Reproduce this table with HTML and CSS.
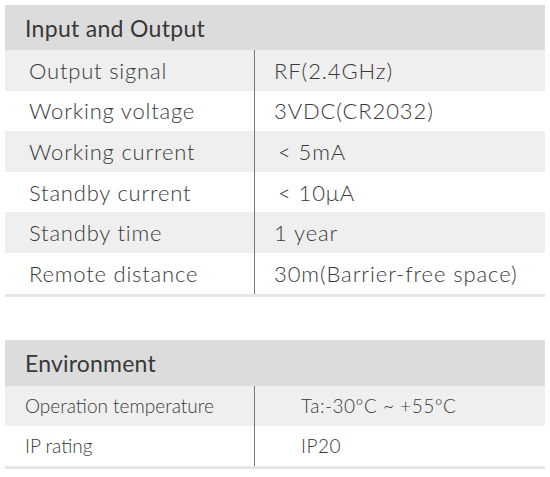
FILE: index.html
```html
<!DOCTYPE html>
<html>
<head>
<meta charset="utf-8">
<link rel="stylesheet" href="styles.css">
</head>
<body>
<div class="page">
  <section class="spec spec-io">
    <div class="spec-head">Input and Output</div>
    <div class="spec-body">
      <div class="row alt"><div class="k">Output signal</div><div class="v">RF(2.4GHz)</div></div>
      <div class="row"><div class="k">Working voltage</div><div class="v">3VDC(CR2032)</div></div>
      <div class="row alt"><div class="k">Working current</div><div class="v v-lt">&lt; 5mA</div></div>
      <div class="row"><div class="k">Standby current</div><div class="v v-lt">&lt; 10μA</div></div>
      <div class="row alt"><div class="k">Standby time</div><div class="v">1 year</div></div>
      <div class="row"><div class="k">Remote distance</div><div class="v">30m(Barrier-free space)</div></div>
    </div>
  </section>
  <section class="spec spec-env">
    <div class="spec-head spaced">Environment</div>
    <div class="spec-body">
      <div class="row alt"><div class="k">Operation temperature</div><div class="v">Ta:-30°C ~ +55°C</div></div>
      <div class="row"><div class="k">IP rating</div><div class="v">IP20</div></div>
    </div>
  </section>
</div>
</body>
</html>
```
FILE: styles.css
```css
html, body {
  margin: 0;
  padding: 0;
  background: #ffffff;
}
.page {
  padding: 5px 5px 0 5px;
  width: 540px;
  font-family: "Lato", "Liberation Sans", sans-serif;
  color: #3a3a3a;
}
.spec {
  display: flex;
  flex-direction: column;
}
.spec-env {
  margin-top: 43px;
}
.spec-head {
  background: #dcdcdc;
  height: 45px;
  display: flex;
  align-items: center;
  padding-left: 20px;
  font-size: 23px;
  font-weight: 400;
  letter-spacing: 0.3px;
  color: #383838;
}
.spec-head.spaced {
  height: 46px;
  letter-spacing: 0.2px;
}
.spec-body {
  border-bottom: 3px solid #e6e6e6;
}
.row {
  display: grid;
  grid-template-columns: 250px 1fr;
  height: 40.6px;
  background: #ffffff;
}
.row.alt {
  background: #efefef;
}
.k {
  display: flex;
  align-items: center;
  padding-left: 24px;
  font-size: 22px;
  font-weight: 300;
  letter-spacing: 0.8px;
  border-right: 1px solid #777777;
}
.v {
  display: flex;
  align-items: center;
  padding-left: 19px;
  font-size: 22px;
  font-weight: 300;
  letter-spacing: 0.9px;
}
.v-lt {
  padding-left: 23px;
}
.spec-env .row {
  height: 40px;
}
.spec-env .k {
  padding-left: 20px;
  font-size: 19px;
  letter-spacing: 0;
}
.spec-env .v {
  padding-left: 46px;
  font-size: 19px;
  letter-spacing: 0.5px;
}
```
